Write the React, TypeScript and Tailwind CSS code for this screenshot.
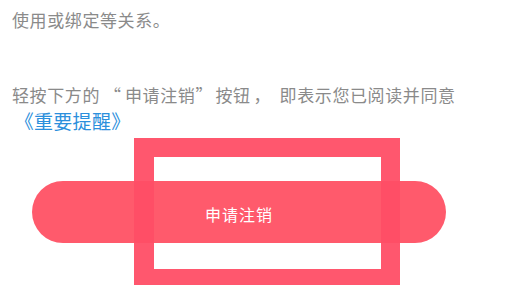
import React from "react";

export default function App() {
  return (
    <div
      className="relative w-[512px] h-[285px] overflow-hidden bg-white"
      style={{ fontFamily: '"Noto Sans CJK SC", "Noto Sans", sans-serif' }}
    >
      <div className="pt-[7px] px-[12px] text-[17px] leading-[26px] text-[#8a8a8a] tracking-[0.6px] whitespace-nowrap">
        <p>
          使用或绑定等关系<span className="inline-block w-[24px]">。</span>
        </p>
        <p className="mt-[49px]">
          轻按下方的<span className="inline-block w-[25px] pl-[4px]">“</span>申请注销
          <span className="inline-block w-[20px] text-right pr-[3px]">”</span>按钮
          <span className="inline-block w-[29px] pl-[3px]">，</span>即表示您已阅读并同意
        </p>
        <p className="text-[#2b8fdc] text-[19px] tracking-[0.3px]">
          <span className="inline-block w-[22px] text-right">《</span>重要提醒
          <span className="inline-block w-[21px]">》</span>
        </p>
      </div>
      <div className="mt-[47px] ml-[32px] w-[414px] h-[62px] rounded-full bg-[#ff5a6c] flex items-center justify-center">
        <span className="text-white text-[16px] tracking-[1px] mt-[3px]">申请注销</span>
      </div>
      <div className="absolute left-[134px] top-[138px] w-[266px] h-[151px] border-[20px] border-r-[19px] border-t-[19px] border-[#ff4e66]/95" />
    </div>
  );
}
